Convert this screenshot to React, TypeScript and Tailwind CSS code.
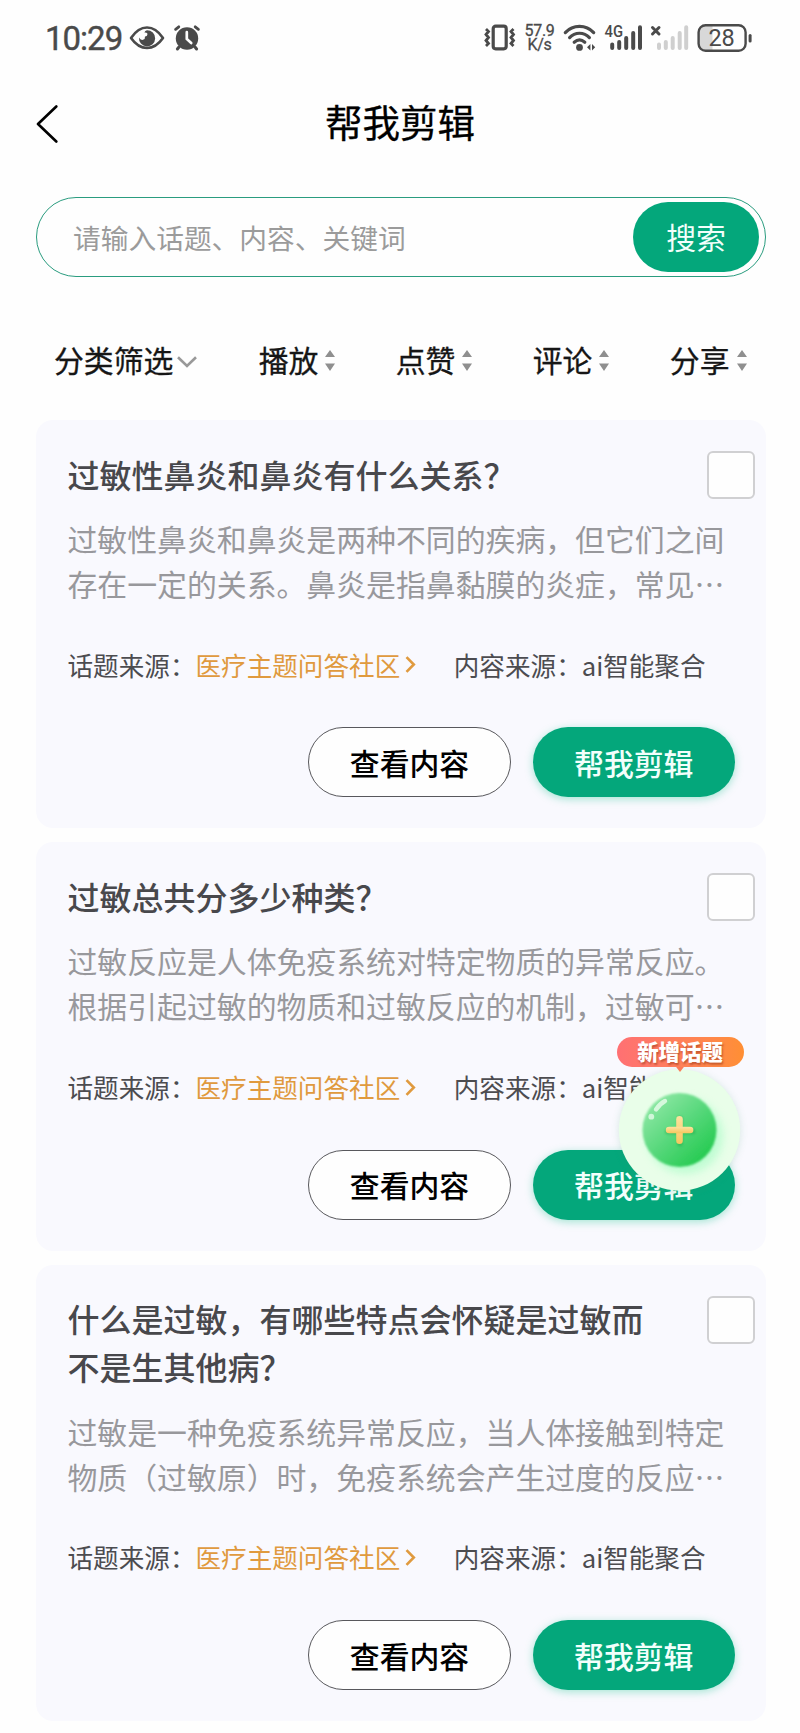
import React from "react";

type Topic = { title: string; lines: [string, string] };

const topics: Topic[] = [
  {
    title: "过敏性鼻炎和鼻炎有什么关系？",
    lines: ["过敏性鼻炎和鼻炎是两种不同的疾病，但它们之间", "存在一定的关系。鼻炎是指鼻黏膜的炎症，常见⋯"],
  },
  {
    title: "过敏总共分多少种类？",
    lines: ["过敏反应是人体免疫系统对特定物质的异常反应。", "根据引起过敏的物质和过敏反应的机制，过敏可⋯"],
  },
  {
    title: "什么是过敏，有哪些特点会怀疑是过敏而不是生其他病？",
    lines: ["过敏是一种免疫系统异常反应，当人体接触到特定", "物质（过敏原）时，免疫系统会产生过度的反应⋯"],
  },
];

function StatusBar() {
  return (
    <div className="flex h-[76px] items-center pl-[45px] pr-[48px] font-['Roboto',sans-serif] text-[#4a4a4a]">
      <span className="w-[79px] whitespace-nowrap text-[33px] leading-none tracking-[-1px] [-webkit-text-stroke:0.4px_#4a4a4a]">10:29</span>
      <svg className="ml-[5px]" width="36" height="26" viewBox="0 0 36 26" fill="none">
        <path d="M2 13 Q9 2.5 18 2.5 T34 13 Q27 23 18 23 T2 13Z" stroke="#4a4a4a" strokeWidth="2.6" strokeLinejoin="round" />
        <path d="M18 5.2 A8.1 8.1 0 1 1 10 12.6 Q11.5 15.4 14 14.8 Q16.4 14 16 11.6 Q18.6 11.6 18.4 8.6 Q17.6 7.4 15.4 7.6 Q16 5.6 18 5.2Z" fill="#4a4a4a" />
      </svg>
      <svg className="ml-[7px]" width="30" height="28" viewBox="0 0 30 28" fill="none" stroke="#4a4a4a" strokeLinecap="round">
        <circle cx="15" cy="14.5" r="11.2" fill="#4a4a4a" stroke="none" />
        <path d="M3.6 5.3 L6.8 2.8M26.4 5.3 L23.2 2.8" strokeWidth="2.8" />
        <path d="M7 23 L5.4 25M23 23 L24.6 25" strokeWidth="3" />
        <path d="M14.8 8.2 V15 L19.2 19" stroke="#fefefe" strokeWidth="2.7" />
      </svg>
      <div className="ml-auto flex items-center">
        <svg width="32" height="28" viewBox="0 0 32 28" fill="none" stroke="#4a4a4a">
          <rect x="9.2" y="2.2" width="13" height="22.6" rx="2.5" strokeWidth="3.2" />
          <path d="M2 5 L4.5 7.5 L2 10.5 L4.5 13.5 L2 16.5 L4.5 19.5 L2 22M29.5 5 L27 7.5 L29.5 10.5 L27 13.5 L29.5 16.5 L27 19.5 L29.5 22" strokeWidth="2.8" />
        </svg>
        <div className="ml-[8px] w-[31px] text-center text-[16px] leading-[14.5px] tracking-[-0.3px] [-webkit-text-stroke:0.3px_#4a4a4a]">
          <div>57.9</div>
          <div>K/s</div>
        </div>
        <svg className="ml-[8px]" width="34" height="28" viewBox="0 0 34 28" fill="none" stroke="#4a4a4a" strokeLinecap="round">
          <path d="M2.3 8.6 C10 0.4 23 0.4 30.7 8.6" strokeWidth="3.2" />
          <path d="M6.6 13.6 C12 7.8 21 7.8 26.4 13.6" strokeWidth="3.2" />
          <path d="M11.2 18.2 Q16.5 13.6 21.8 18.2" strokeWidth="3.2" />
          <circle cx="16.5" cy="23.4" r="3.4" fill="#4a4a4a" stroke="none" />
          <path d="M27.4 20 V26.4 L24 23.2Z M29 20 V26.4 L32.2 23.2Z" fill="#4a4a4a" stroke="none" />
        </svg>
        <svg className="ml-[7px] overflow-visible" width="39" height="28" viewBox="0 0 39 28" fill="none" stroke="#4a4a4a" strokeLinecap="round">
          <text x="0.6" y="13" fontSize="16" fontWeight="500" fill="#4a4a4a" stroke="none" textLength="18.5" lengthAdjust="spacingAndGlyphs">4G</text>
          <path d="M8.2 20.5V24M15.2 18V24M22.2 14V24M29.2 9V24M36 3.2V24" strokeWidth="4" />
        </svg>
        <svg className="ml-[7px]" width="39" height="28" viewBox="0 0 39 28" fill="none" strokeLinecap="round">
          <path d="M2.5 3.5 L9 10M9 3.5 L2.5 10" stroke="#4a4a4a" strokeWidth="3" />
          <path d="M9 20.5V24M15.8 18V24M22.7 14V24M29.7 9V24M36.2 3.2V24" stroke="#cfcfcf" strokeWidth="4" />
        </svg>
        <svg className="ml-[7px]" width="56" height="30" viewBox="0 0 56 30" fill="none">
          <path d="M9 2.5 H16.5 V27.5 H9 Q3 27.5 3 21 V9 Q3 2.5 9 2.5Z" fill="#d8d8d8" />
          <rect x="2.6" y="2.2" width="47" height="25.6" rx="7" stroke="#4a4a4a" strokeWidth="2.4" />
          <rect x="52.6" y="11" width="3" height="8.6" rx="1.5" fill="#4a4a4a" />
          <text x="25.6" y="23.4" textAnchor="middle" fontSize="23.5" fill="#4a4a4a">28</text>
        </svg>
      </div>
    </div>
  );
}

function SortItem({ label }: { label: string }) {
  return (
    <button className="flex items-center">
      {label}
      <svg className="ml-[7px] mt-[2px]" width="10" height="21" viewBox="0 0 10 21" fill="#8f8f8f">
        <path d="M5 0 L10 7 H0Z M5 21 L0 13.6 H10Z" />
      </svg>
    </button>
  );
}

function Card({ topic }: { topic: Topic }) {
  return (
    <section className="flex flex-col rounded-[17px] bg-[#f9f9fe] pb-[31px] pl-[31.5px] pr-[11px] pt-[31px]">
      <div className="flex items-start justify-between">
        <h2 className="-mt-[1.5px] mb-[1.5px] w-[590px] text-[32px] font-medium leading-[48px] text-[#48484c]">{topic.title}</h2>
        <div className="h-[48px] w-[48px] rounded-[6px] border-2 border-[#d0d0d2] bg-[#fefefe]" />
      </div>
      <div className="mt-[17px] whitespace-nowrap text-[29.87px] leading-[44.8px] text-[#98989c]">
        <p>{topic.lines[0]}</p>
        <p>{topic.lines[1]}</p>
      </div>
      <div className="mt-[40px] flex items-center whitespace-nowrap text-[25.6px] leading-[38.4px] text-[#4c4c50]">
        <span>话题来源：</span>
        <span className="text-[#e09a3e]">医疗主题问答社区</span>
        <svg className="ml-[5px]" width="11" height="17" viewBox="0 0 11 17" fill="none" stroke="#e09a3e" strokeWidth="2.6">
          <path d="M1.5 1.2 L8.8 8.5 L1.5 15.8" />
        </svg>
        <span className="ml-[37.5px]">内容来源：ai智能聚合</span>
      </div>
      <div className="mr-5 mt-[43.4px] flex justify-end gap-[21.5px] text-[29.87px] font-medium">
        <button className="h-[70px] w-[203px] rounded-full border border-[#58585c] bg-[#fefefe] text-black">查看内容</button>
        <button className="h-[70px] w-[202.5px] rounded-full bg-[#04a77b] text-[#f2fffb] shadow-[0_2px_8px_rgba(4,190,130,0.35)]">帮我剪辑</button>
      </div>
    </section>
  );
}

function AddTopic() {
  return (
    <div className="absolute left-[606px] top-[1036px] h-[166px] w-[148px]">
      <svg className="absolute left-0 top-0" width="148" height="166" viewBox="0 0 148 166">
        <defs>
          <linearGradient id="ball" x1="0.1" y1="0.1" x2="0.85" y2="0.9">
            <stop offset="0" stopColor="#90e8a6" />
            <stop offset="0.5" stopColor="#58d87c" />
            <stop offset="1" stopColor="#24ca50" />
          </linearGradient>
          <linearGradient id="gold" x1="0" y1="0" x2="0" y2="1">
            <stop offset="0" stopColor="#fbe3a0" />
            <stop offset="1" stopColor="#f6c75e" />
          </linearGradient>
          <filter id="soft" x="-30%" y="-30%" width="160%" height="160%">
            <feGaussianBlur stdDeviation="4" />
          </filter>
          <filter id="edge" x="-30%" y="-30%" width="160%" height="160%">
            <feGaussianBlur stdDeviation="0.9" />
          </filter>
        </defs>
        <circle cx="73.5" cy="95" r="60" fill="#2f8f60" opacity="0.2" filter="url(#soft)" />
        <circle cx="73.5" cy="94" r="60.7" fill="#e9fee9" />
        <circle cx="79" cy="100" r="38" fill="#a4fcc4" opacity="0.6" filter="url(#soft)" />
        <circle cx="73.5" cy="94" r="37" fill="url(#ball)" filter="url(#edge)" />
        <path d="M50 73.5 Q53.5 68 59 65" stroke="#d5f8dc" strokeWidth="4.4" strokeLinecap="round" fill="none" />
        <circle cx="45.3" cy="80.7" r="2.9" fill="#d0f6d9" />
        <path d="M74 83 V107.5 M62 95.5 H86.5" stroke="#129a3c" strokeWidth="6" strokeLinecap="round" opacity="0.35" filter="url(#edge)" />
        <rect x="70.2" y="80" width="6.6" height="28" rx="3.3" fill="url(#gold)" />
        <rect x="59.8" y="90.7" width="27.6" height="6.6" rx="3.3" fill="url(#gold)" />
        <path d="M69 29.5 H79 L74 36Z" fill="#fb7a57" />
      </svg>
      <div className="absolute left-[10.5px] top-[0.5px] flex h-[30px] w-[127px] items-center justify-center rounded-full bg-gradient-to-r from-[#ff7073] to-[#ff8f33] pb-[2px] text-[21.4px] font-black leading-none text-white [text-shadow:1px_2px_2px_rgba(150,50,20,0.55)]">
        新增话题
      </div>
    </div>
  );
}

export default function App() {
  return (
    <div className="relative h-[1733px] w-[800px] overflow-hidden bg-[#fefefe] font-['Noto_Sans_CJK_SC',sans-serif]">
      <StatusBar />
      <header className="grid h-[92px] grid-cols-[1fr_auto_1fr] items-center px-9">
        <svg width="22" height="38" viewBox="0 0 22 38" fill="none" stroke="#000" strokeWidth="2.6" strokeLinecap="round" strokeLinejoin="round" className="mt-[4px]">
          <path d="M20.3 1.5 L2 19 L20.3 36.5" />
        </svg>
        <h1 className="mb-[3px] text-[37.5px] leading-none text-black [-webkit-text-stroke:0.3px_#000]">帮我剪辑</h1>
        <span />
      </header>
      <div className="mx-9 mt-[29px] flex h-[80px] w-[730px] items-center justify-between rounded-full border-[1.5px] border-[#2a9c7f] pl-[36px] pr-[6px]">
        <span className="mt-[2px] text-[27.73px] text-[#9b9b9b]">请输入话题、内容、关键词</span>
        <button className="h-[70px] w-[126px] rounded-full bg-[#04a77b] pb-[2px] text-[29.87px] text-[#f2fffb]">搜索</button>
      </div>
      <nav className="mt-[60px] flex h-[45px] items-center gap-[60.3px] pl-[54px] text-[29.87px] text-[#161616] [-webkit-text-stroke:0.3px_#161616]">
        <button className="mr-[1px] flex items-center">
          分类筛选
          <svg className="ml-[4px] mt-[4px]" width="20" height="12" viewBox="0 0 20 12" fill="none" stroke="#999" strokeWidth="2.6">
            <path d="M1 1.2 L10 10 L19 1.2" />
          </svg>
        </button>
        {["播放", "点赞", "评论", "分享"].map((label) => (
          <SortItem key={label} label={label} />
        ))}
      </nav>
      <main className="mx-9 mt-[38px] flex w-[730px] flex-col gap-[14px]">
        {topics.map((topic) => (
          <Card key={topic.title} topic={topic} />
        ))}
      </main>
      <AddTopic />
    </div>
  );
}
